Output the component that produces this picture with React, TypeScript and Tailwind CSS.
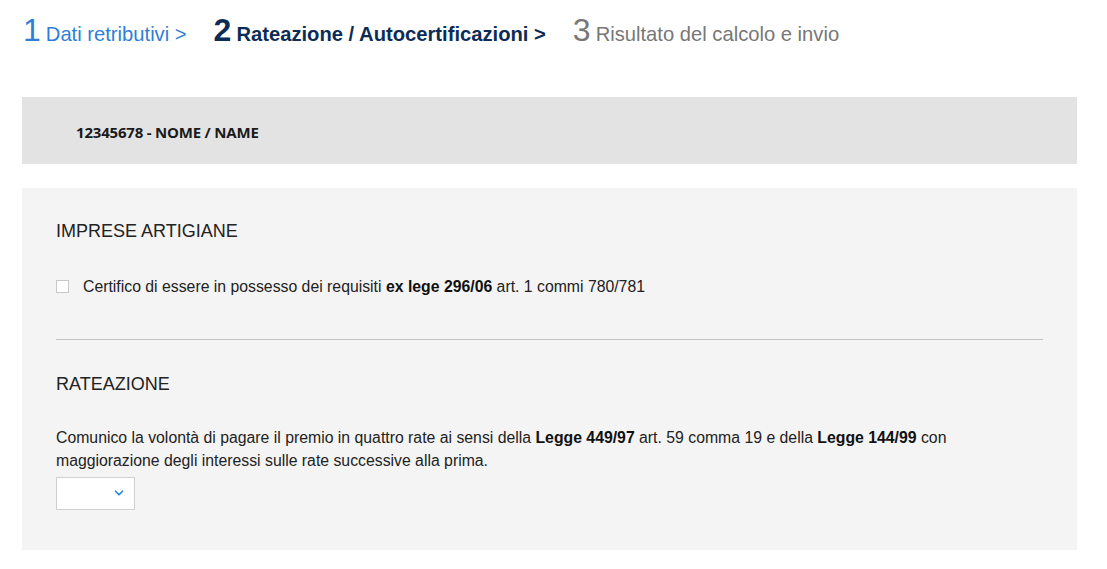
import { ChevronDown } from 'lucide-react';

const STEPS = [
  { n: '1', label: 'Dati retributivi >', tone: 'done' },
  { n: '2', label: 'Rateazione / Autocertificazioni >', tone: 'current' },
  { n: '3', label: 'Risultato del calcolo e invio', tone: 'todo' },
] as const;

const toneClass = {
  done: 'text-[#2f7fd6]',
  current: 'text-[#0d2c55] font-bold',
  todo: 'text-[#777777]',
};

export default function App() {
  return (
    <div className="min-h-[569px] w-[1107px] bg-white font-['Liberation_Sans',Arial,sans-serif] text-[#222]">
      {/* Stepper */}
      <nav className="flex h-[52px] items-baseline gap-[27px] px-[23px] pt-[10px]">
        {STEPS.map((s) => (
          <div key={s.n} className={`flex items-baseline gap-[5px] ${toneClass[s.tone]}`}>
            <span className="text-[32px] leading-[40px]">{s.n}</span>
            <span className="text-[20.2px]">{s.label}</span>
          </div>
        ))}
      </nav>

      <div className="mx-[22px] mt-[45px] w-[1055px]">
        {/* Insured header */}
        <div className="flex h-[67px] items-center bg-[#e3e3e3] pl-[54px] pt-[4px]">
          <span className="font-['Open_Sans',sans-serif] text-[15px] font-bold tracking-[-0.2px] text-[#1a1a1a]">
            12345678 - NOME / NAME
          </span>
        </div>

        {/* Form panel */}
        <div className="mt-[24px] h-[362px] bg-[#f4f4f4] px-[34px] pt-[32px]">
          <h2 className="text-[18px] leading-[22px] text-[#222]">IMPRESE ARTIGIANE</h2>

          <label className="mt-[33px] flex items-center gap-[14px] text-[15.8px] text-[#222]">
            <span className="h-[13px] w-[13px] border border-[#c8c8c8] bg-white" />
            <span>
              Certifico di essere in possesso dei requisiti{' '}
              <b className="text-[#111]">ex lege 296/06</b> art. 1 commi 780/781
            </span>
          </label>

          <hr className="mt-[40px] w-[987px] border-t border-[#c4c4c4]" />

          <h2 className="mt-[33px] text-[18px] leading-[22px] text-[#222]">RATEAZIONE</h2>

          <p className="mt-[31px] max-w-[960px] text-[15.8px] leading-[23px] text-[#222]">
            Comunico la volontà di pagare il premio in quattro rate ai sensi della{' '}
            <b className="text-[#111]">Legge 449/97</b> art. 59 comma 19 e della{' '}
            <b className="text-[#111]">Legge 144/99</b> con maggiorazione degli interessi sulle rate
            successive alla prima.
          </p>

          <div className="mt-[5px] flex h-[33px] w-[79px] items-center justify-end border border-[#cfcfcf] bg-white pr-[8px]">
            <ChevronDown size={14} strokeWidth={3} className="text-[#2a86d8]" />
          </div>
        </div>
      </div>
    </div>
  );
}
